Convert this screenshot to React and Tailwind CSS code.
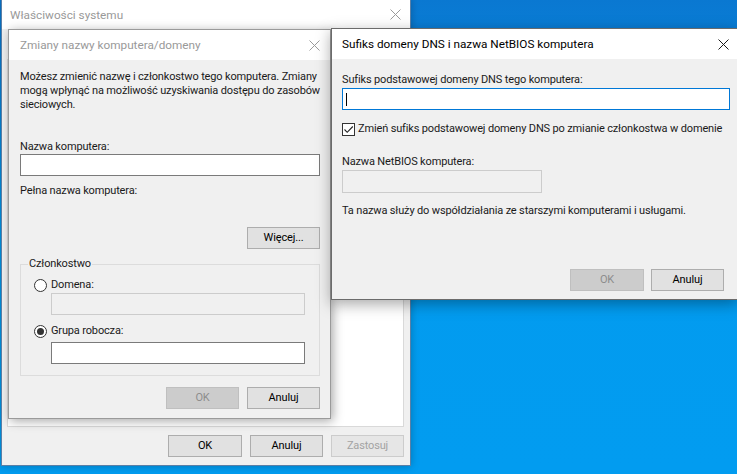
import React from 'react'

function CloseIcon({ active }) {
  return (
    <svg width="11" height="11" viewBox="0 0 11 11" className="block">
      <path d="M0.5 0.5 L10.5 10.5 M10.5 0.5 L0.5 10.5" stroke={active ? '#1a1a1a' : '#9a9a9a'} strokeWidth="1" fill="none" />
    </svg>
  )
}

function WinButton({ children, variant = 'normal', className = '' }) {
  const look = {
    normal: 'bg-[#e1e1e1] border-[#adadad] text-black',
    disabled: 'bg-[#cccccc] border-[#bfbfbf] text-[#8d8d8d]',
    muted: 'bg-[#e6e6e6] border-[#cccccc] text-[#a3a3a3]',
  }[variant]
  return (
    <div className={`h-[22px] flex items-center justify-center border ${look} ${className}`}>
      {children}
    </div>
  )
}

function TextBox({ className = '', disabled, focused, children }) {
  return (
    <div
      className={`h-[22px] border ${
        disabled ? 'bg-[#f0f0f0] border-[#cccccc]' : focused ? 'bg-white border-[#0078d7]' : 'bg-white border-[#7a7a7a]'
      } ${className}`}
    >
      {children}
    </div>
  )
}

function Radio({ checked }) {
  return (
    <div className="w-[13px] h-[13px] rounded-full border border-[#333] bg-white flex items-center justify-center">
      {checked && <div className="w-[7px] h-[7px] rounded-full bg-[#333]" />}
    </div>
  )
}

export default function App() {
  return (
    <div className="relative w-[737px] h-[474px] overflow-hidden bg-gradient-to-b from-[#0a78d1] via-[#029bef] to-[#029cf0] font-['Roboto','Liberation_Sans',sans-serif] text-[11px] tracking-[-0.15px] leading-[14px] text-[#1a1a1a]">
      {/* Właściwości systemu (back) */}
      <div className="absolute left-[1px] top-[-1px] w-[410px] h-[467px] border border-[#5b7fa6] bg-[#f0f0f0] flex flex-col shadow-[0_0_8px_rgba(0,0,0,0.25)]">
        <div className="h-[29px] shrink-0 bg-white flex items-center justify-between pl-[8px] pr-[9px]">
          <span className="text-[11.75px] tracking-normal text-[#999999]">Właściwości systemu</span>
          <CloseIcon />
        </div>
        <div className="flex-1 flex flex-col px-[5px]">
          <div className="flex-1 mt-[30px] bg-white border border-[#d9d9d9] mr-[1px]" />
          <div className="flex justify-end gap-[8px] mt-[8px] mb-[8px] mr-[1px]">
            <WinButton className="w-[74px]">OK</WinButton>
            <WinButton className="w-[73px]">Anuluj</WinButton>
            <WinButton variant="muted" className="w-[73px]">Zastosuj</WinButton>
          </div>
        </div>
      </div>

      {/* Zmiany nazwy komputera/domeny (middle) */}
      <div className="absolute left-[8px] top-[29px] w-[323px] h-[390px] border border-[#9a9a9a] bg-[#f0f0f0] flex flex-col shadow-[2px_2px_10px_rgba(0,0,0,0.35)]">
        <div className="h-[30px] shrink-0 bg-white flex items-center justify-between pl-[11px] pr-[10px]">
          <span className="text-[11.75px] tracking-normal text-[#999999]">Zmiany nazwy komputera/domeny</span>
          <CloseIcon />
        </div>
        <div className="flex flex-col pl-[11px] pr-[10px] pt-[10px]">
          <p>
            Możesz zmienić nazwę i członkostwo tego komputera. Zmiany mogą wpłynąć na możliwość uzyskiwania dostępu do zasobów sieciowych.
          </p>
          <div className="mt-[28px]">Nazwa komputera:</div>
          <TextBox className="w-[300px]" />
          <div className="mt-[8px]">Pełna nazwa komputera:</div>
          <div className="flex justify-end mt-[29px]">
            <WinButton className="w-[73px]">Więcej...</WinButton>
          </div>
          <fieldset className="mt-[8px] border border-[#dcdcdc] pb-[11px]">
            <legend className="ml-[7px] px-[1px]">Członkostwo</legend>
            <div className="flex flex-col pl-[13px] pr-[14px]">
              <div className="flex items-center gap-[4px] mt-[7px]">
                <Radio />
                <span>Domena:</span>
              </div>
              <TextBox disabled className="ml-[17px] mt-[1px]" />
              <div className="flex items-center gap-[4px] mt-[9px]">
                <Radio checked />
                <span>Grupa robocza:</span>
              </div>
              <TextBox className="ml-[17px] mt-[4px]" />
            </div>
          </fieldset>
          <div className="flex justify-end gap-[8px] mt-[11px]">
            <WinButton variant="disabled" className="w-[73px]">OK</WinButton>
            <WinButton className="w-[73px]">Anuluj</WinButton>
          </div>
        </div>
      </div>

      {/* Sufiks domeny DNS (front) */}
      <div className="absolute left-[331px] top-[28px] w-[407px] h-[272px] border border-[#6b6b6b] bg-[#f0f0f0] flex flex-col shadow-[0_4px_14px_rgba(0,0,0,0.35)]">
        <div className="h-[30px] shrink-0 bg-white flex items-center justify-between pl-[10px] pr-[8px]">
          <span className="text-[11.75px] tracking-normal text-black">Sufiks domeny DNS i nazwa NetBIOS komputera</span>
          <CloseIcon active />
        </div>
        <div className="flex flex-col pl-[10px] pr-[7px] pt-[14px]">
          <div>Sufiks podstawowej domeny DNS tego komputera:</div>
          <TextBox focused className="w-[388px] mt-[1px] flex items-center pl-[3px]">
            <div className="w-[1px] h-[13px] bg-black" />
          </TextBox>
          <div className="flex items-center gap-[3px] mt-[12px]">
            <div className="w-[13px] h-[13px] border border-[#333] bg-white flex items-center justify-center">
              <svg width="11" height="11" viewBox="0 0 11 11">
                <path d="M1.5 5.5 L4.2 8.3 L9.8 2.5" stroke="#222" strokeWidth="1.1" fill="none" />
              </svg>
            </div>
            <span className="whitespace-nowrap">Zmień sufiks podstawowej domeny DNS po zmianie członkostwa w domenie</span>
          </div>
          <div className="mt-[19px]">Nazwa NetBIOS komputera:</div>
          <TextBox disabled className="w-[200px] h-[23px] mt-[1px]" />
          <div className="mt-[11px]">Ta nazwa służy do współdziałania ze starszymi komputerami i usługami.</div>
          <div className="flex justify-end gap-[7px] mt-[51px] pr-[6px]">
            <WinButton variant="disabled" className="w-[74px]">OK</WinButton>
            <WinButton className="w-[73px]">Anuluj</WinButton>
          </div>
        </div>
      </div>
    </div>
  )
}
